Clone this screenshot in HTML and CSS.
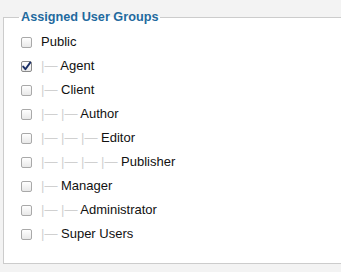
FILE: index.html
```html
<!DOCTYPE html>
<html>
<head>
<meta charset="utf-8">
<link rel="stylesheet" href="styles.css">
</head>
<body>
<fieldset class="groups">
  <legend class="groups-legend">Assigned User Groups</legend>
  <ul class="group-list">
    <li class="group"><span class="cb"></span><span class="name">Public</span></li>
    <li class="group"><span class="cb checked"><svg class="tick" viewBox="0 0 11 11" width="11" height="11"><path d="M2.2 5.6 L4.4 8.2 L9.2 1.6" fill="none" stroke="#1b2f66" stroke-width="1.9" stroke-linecap="round" stroke-linejoin="round"/></svg></span><span class="name"><span class="gi">|—</span> Agent</span></li>
    <li class="group"><span class="cb"></span><span class="name"><span class="gi">|—</span> Client</span></li>
    <li class="group"><span class="cb"></span><span class="name"><span class="gi">|—</span> <span class="gi">|—</span> Author</span></li>
    <li class="group"><span class="cb"></span><span class="name"><span class="gi">|—</span> <span class="gi">|—</span> <span class="gi">|—</span> Editor</span></li>
    <li class="group"><span class="cb"></span><span class="name"><span class="gi">|—</span> <span class="gi">|—</span> <span class="gi">|—</span> <span class="gi">|—</span> Publisher</span></li>
    <li class="group"><span class="cb"></span><span class="name"><span class="gi">|—</span> Manager</span></li>
    <li class="group"><span class="cb"></span><span class="name"><span class="gi">|—</span> <span class="gi">|—</span> Administrator</span></li>
    <li class="group"><span class="cb"></span><span class="name"><span class="gi">|—</span> Super Users</span></li>
  </ul>
</fieldset>
</body>
</html>
```
FILE: styles.css
```css
html, body {
  margin: 0;
  padding: 0;
  background: #f3f3f3;
  overflow: hidden;
  font-family: "Liberation Sans", Arial, Helvetica, sans-serif;
}
body {
  width: 341px;
  height: 272px;
  padding-top: 8px;
  box-sizing: border-box;
}
.groups {
  margin: 0 0 0 3px;
  padding: 0 0 17px 0;
  width: 338px;
  border: 1px solid #cccccc;
  border-right: 0;
  background: #ffffff;
  box-sizing: border-box;
  min-width: 0;
}
.groups-legend {
  margin-left: 15px;
  padding: 0 2px;
  font-size: 12.7px;
  font-weight: bold;
  line-height: 18px;
  color: #1f6a9e;
}
.group-list {
  list-style: none;
  margin: 4px 0 0 0;
  padding: 0 0 0 17px;
}
.group {
  display: flex;
  align-items: center;
  height: 24px;
  font-size: 13px;
  color: #111;
}
.cb {
  box-sizing: border-box;
  width: 11px;
  height: 11px;
  border: 1px solid #a9a9a9;
  border-radius: 2px;
  background: linear-gradient(#ffffff, #e8e8e8);
  margin-right: 9px;
  position: relative;
  flex: none;
}
.cb.checked {
  border-color: #8a8a8a;
}
.tick {
  position: absolute;
  left: -1px;
  top: -1px;
}
.name {
  white-space: pre;
  line-height: 16px;
}
.gi {
  color: #d0d0d0;
}
```
